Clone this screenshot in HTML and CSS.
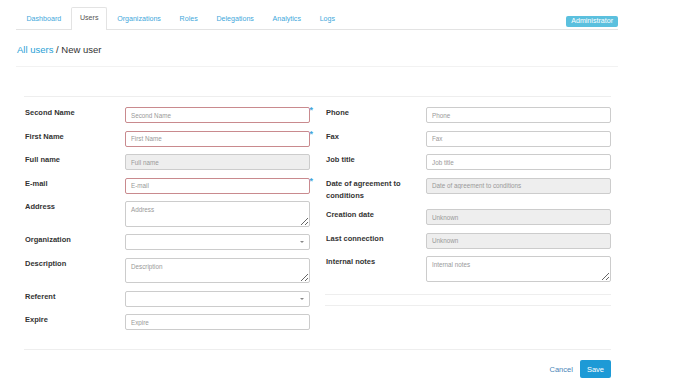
FILE: index.html
```html
<!DOCTYPE html>
<html lang="en">
<head>
    <meta charset="UTF-8">
    <title>New user</title>
    <link rel="stylesheet" href="styles.css">
</head>
<body>
    <div class="page">
        <div class="tabs">
            <a href="#" class="tab">Dashboard</a>
            <a href="#" class="tab active">Users</a>
            <a href="#" class="tab">Organizations</a>
            <a href="#" class="tab">Roles</a>
            <a href="#" class="tab">Delegations</a>
            <a href="#" class="tab">Analytics</a>
            <a href="#" class="tab">Logs</a>
            <span class="badge">Administrator</span>
        </div>

        <h1 class="title"><a href="#">All users</a> / New user</h1>

        <form class="user-form">
            <div class="columns">
                <div class="col">
                    <label class="lbl">Second Name</label>
                    <div class="field req"><input class="inp invalid" placeholder="Second Name"></div>
                    <label class="lbl">First Name</label>
                    <div class="field req"><input class="inp invalid" placeholder="First Name"></div>
                    <label class="lbl">Full name</label>
                    <div class="field"><input class="inp" placeholder="Full name" disabled></div>
                    <label class="lbl">E-mail</label>
                    <div class="field req"><input class="inp invalid" placeholder="E-mail"></div>
                    <label class="lbl">Address</label>
                    <div class="field"><textarea class="inp area" placeholder="Address"></textarea></div>
                    <label class="lbl">Organization</label>
                    <div class="field"><div class="inp select"><span class="caret"></span></div></div>
                    <label class="lbl">Description</label>
                    <div class="field"><textarea class="inp area" placeholder="Description"></textarea></div>
                    <label class="lbl">Referent</label>
                    <div class="field"><div class="inp select"><span class="caret"></span></div></div>
                    <label class="lbl">Expire</label>
                    <div class="field"><input class="inp" placeholder="Expire"></div>
                </div>
                <div class="col">
                    <label class="lbl">Phone</label>
                    <div class="field"><input class="inp" placeholder="Phone"></div>
                    <label class="lbl">Fax</label>
                    <div class="field"><input class="inp" placeholder="Fax"></div>
                    <label class="lbl">Job title</label>
                    <div class="field"><input class="inp" placeholder="Job title"></div>
                    <label class="lbl">Date of agreement to conditions</label>
                    <div class="field"><input class="inp" placeholder="Date of agreement to conditions" disabled></div>
                    <label class="lbl">Creation date</label>
                    <div class="field"><input class="inp" placeholder="Unknown" disabled></div>
                    <label class="lbl">Last connection</label>
                    <div class="field"><input class="inp" placeholder="Unknown" disabled></div>
                    <label class="lbl">Internal notes</label>
                    <div class="field"><textarea class="inp area" placeholder="Internal notes"></textarea></div>
                    <div class="sep"></div>
                </div>
            </div>
            <div class="actions">
                <a href="#" class="cancel">Cancel</a>
                <button type="button" class="save">Save</button>
            </div>
        </form>
    </div>
</body>
</html>
```

FILE: styles.css
```css
body {
    margin: 0;
    background: #fff;
    color: #333;
    font-family: "Liberation Sans", Arial, sans-serif;
}

a {
    color: #2a9fd6;
    text-decoration: none;
}

.page {
    width: 602px;
    margin-left: 16px;
}

/* tabs */
.tabs {
    display: flex;
    align-items: flex-end;
    height: 30px;
    padding-left: 2px;
    border-bottom: 1px solid #e3e3e3;
    box-sizing: border-box;
}

.tab {
    display: block;
    height: 21px;
    line-height: 21px;
    padding: 0 7.5px;
    margin-right: 1.7px;
    margin-bottom: -1px;
    font-size: 7.1px;
    color: #3fa7db;
    border: 1px solid transparent;
    border-bottom: none;
    border-radius: 2px 2px 0 0;
}

.tab.active {
    color: #555;
    background: #fff;
    border-color: #e3e3e3;
    height: 22px;
}

.badge {
    margin-left: auto;
    align-self: flex-start;
    margin-top: 16px;
    background: #5bc0de;
    color: #fff;
    font-size: 7.1px;
    padding: 2px 5px;
    border-radius: 2px;
    line-height: 7px;
}

.title {
    margin: 0;
    font-weight: normal;
    font-size: 9.5px;
    line-height: 12px;
    padding: 14px 1px 10px;
    border-bottom: 1px solid #f2f2f2;
}

/* form */
.user-form {
    margin: 29px 7px 0 8px;
    border-top: 1px solid #eee;
}

.columns {
    display: grid;
    grid-template-columns: 285px 285px;
    column-gap: 16px;
    padding: 10px 0 19px 1px;
    border-bottom: 1px solid #eee;
}

.col {
    display: grid;
    grid-template-columns: 100px 1fr;
    row-gap: 7.5px;
    align-content: start;
}

.lbl {
    font-size: 7.5px;
    font-weight: bold;
    line-height: 12px;
    color: #333;
}

.field {
    position: relative;
}

.inp {
    display: block;
    width: 100%;
    height: 16px;
    box-sizing: border-box;
    margin: 0;
    padding: 0 5px;
    font-family: "Liberation Sans", Arial, sans-serif;
    font-size: 6.3px;
    color: #555;
    background: #fff;
    border: 1px solid #ccc;
    border-radius: 2px;
    outline: none;
}

.inp::placeholder {
    color: #999;
}

.inp:disabled {
    background: #eee;
}

.inp.invalid {
    border-color: #c98a8e;
}

.req::after {
    content: "*";
    position: absolute;
    top: -2px;
    right: -3px;
    color: #42a5da;
    font-size: 9px;
    font-weight: bold;
}

.area {
    height: 25.5px;
    padding-top: 4px;
    resize: vertical;
}

.select {
    position: relative;
}

.caret {
    position: absolute;
    right: 5px;
    top: 6px;
    border-left: 2px solid transparent;
    border-right: 2px solid transparent;
    border-top: 2px solid #888;
}

.sep {
    grid-column: 1 / 3;
    height: 10px;
    margin-top: 5px;
    margin-left: -1px;
    border-top: 1px solid #eee;
    border-bottom: 1px solid #eee;
}

.actions {
    display: flex;
    justify-content: flex-end;
    align-items: center;
    gap: 7px;
    padding: 10px 0;
}

.cancel {
    font-size: 7.5px;
    color: #4a86b8;
}

.save {
    background: #1d9ad6;
    color: #fff;
    border: none;
    border-radius: 2px;
    font-family: "Liberation Sans", Arial, sans-serif;
    font-size: 7.5px;
    height: 18px;
    padding: 0 7px;
}
```
